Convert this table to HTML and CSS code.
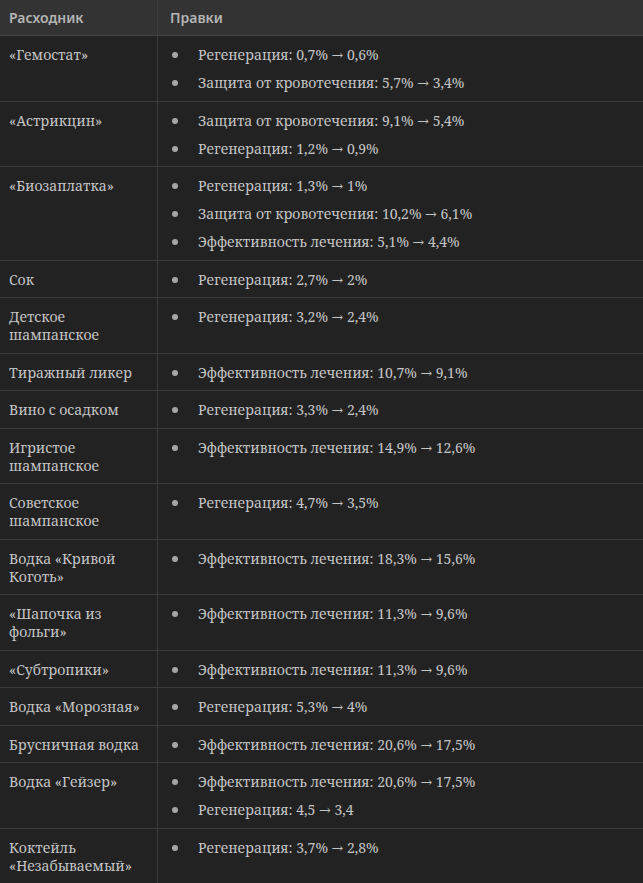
FILE: index.html
```html
<!DOCTYPE html>
<html lang="ru">
<head>
  <meta charset="UTF-8">
  <title>Расходники</title>
  <link rel="stylesheet" href="styles.css">
</head>
<body>
  <table class="changes">
    <thead>
      <tr>
        <th class="item">Расходник</th>
        <th>Правки</th>
      </tr>
    </thead>
    <tbody>
      <tr>
        <td class="item">«Гемостат»</td>
        <td><ul><li>Регенерация: 0,7% → 0,6%</li><li>Защита от кровотечения: 5,7% → 3,4%</li></ul></td>
      </tr>
      <tr>
        <td class="item">«Астрикцин»</td>
        <td><ul><li>Защита от кровотечения: 9,1% → 5,4%</li><li>Регенерация: 1,2% → 0,9%</li></ul></td>
      </tr>
      <tr>
        <td class="item">«Биозаплатка»</td>
        <td><ul><li>Регенерация: 1,3% → 1%</li><li>Защита от кровотечения: 10,2% → 6,1%</li><li>Эффективность лечения: 5,1% → 4,4%</li></ul></td>
      </tr>
      <tr>
        <td class="item">Сок</td>
        <td><ul><li>Регенерация: 2,7% → 2%</li></ul></td>
      </tr>
      <tr>
        <td class="item">Детское шампанское</td>
        <td><ul><li>Регенерация: 3,2% → 2,4%</li></ul></td>
      </tr>
      <tr>
        <td class="item">Тиражный ликер</td>
        <td><ul><li>Эффективность лечения: 10,7% → 9,1%</li></ul></td>
      </tr>
      <tr>
        <td class="item">Вино с осадком</td>
        <td><ul><li>Регенерация: 3,3% → 2,4%</li></ul></td>
      </tr>
      <tr>
        <td class="item">Игристое шампанское</td>
        <td><ul><li>Эффективность лечения: 14,9% → 12,6%</li></ul></td>
      </tr>
      <tr>
        <td class="item">Советское шампанское</td>
        <td><ul><li>Регенерация: 4,7% → 3,5%</li></ul></td>
      </tr>
      <tr>
        <td class="item">Водка «Кривой Коготь»</td>
        <td><ul><li>Эффективность лечения: 18,3% → 15,6%</li></ul></td>
      </tr>
      <tr>
        <td class="item">«Шапочка из фольги»</td>
        <td><ul><li>Эффективность лечения: 11,3% → 9,6%</li></ul></td>
      </tr>
      <tr>
        <td class="item">«Субтропики»</td>
        <td><ul><li>Эффективность лечения: 11,3% → 9,6%</li></ul></td>
      </tr>
      <tr>
        <td class="item">Водка «Морозная»</td>
        <td><ul><li>Регенерация: 5,3% → 4%</li></ul></td>
      </tr>
      <tr>
        <td class="item">Брусничная водка</td>
        <td><ul><li>Эффективность лечения: 20,6% → 17,5%</li></ul></td>
      </tr>
      <tr>
        <td class="item">Водка «Гейзер»</td>
        <td><ul><li>Эффективность лечения: 20,6% → 17,5%</li><li>Регенерация: 4,5 → 3,4</li></ul></td>
      </tr>
      <tr>
        <td class="item">Коктейль «Незабываемый»</td>
        <td><ul><li>Регенерация: 3,7% → 2,8%</li></ul></td>
      </tr>
    </tbody>
  </table>
</body>
</html>
```
FILE: styles.css
```css
body {
  margin: 0;
  background-color: #222222;
  color: #c4c4c4;
  font-family: "Noto Serif", "DejaVu Serif", serif;
  font-size: 14px;
}
.changes {
  width: 100%;
  border-collapse: collapse;
}
th {
  background-color: #333333;
  color: #b4b4b4;
  font-family: "Noto Sans", sans-serif;
  font-weight: 600;
  font-size: 14px;
  text-align: left;
  height: 35px;
  padding: 0 10px;
  border-bottom: 1px solid #444444;
}
td {
  vertical-align: top;
  padding: 10px 10px 8.5px;
  line-height: 18px;
  border-top: 1px solid #3c3c3c;
}
th + th, td + td {
  border-left: 1px solid #3c3c3c;
  padding-left: 12px;
}
.item {
  width: 138px;
  padding-left: 9px;
  padding-right: 10px;
}
ul {
  margin: 0;
  padding: 0;
  list-style: none;
}
li + li {
  margin-top: 10px;
}
li::before {
  content: "";
  display: inline-block;
  width: 6px;
  height: 6px;
  border-radius: 50%;
  background-color: #a6a6a6;
  margin: 0 20px 2px 2px;
  vertical-align: middle;
}
```
